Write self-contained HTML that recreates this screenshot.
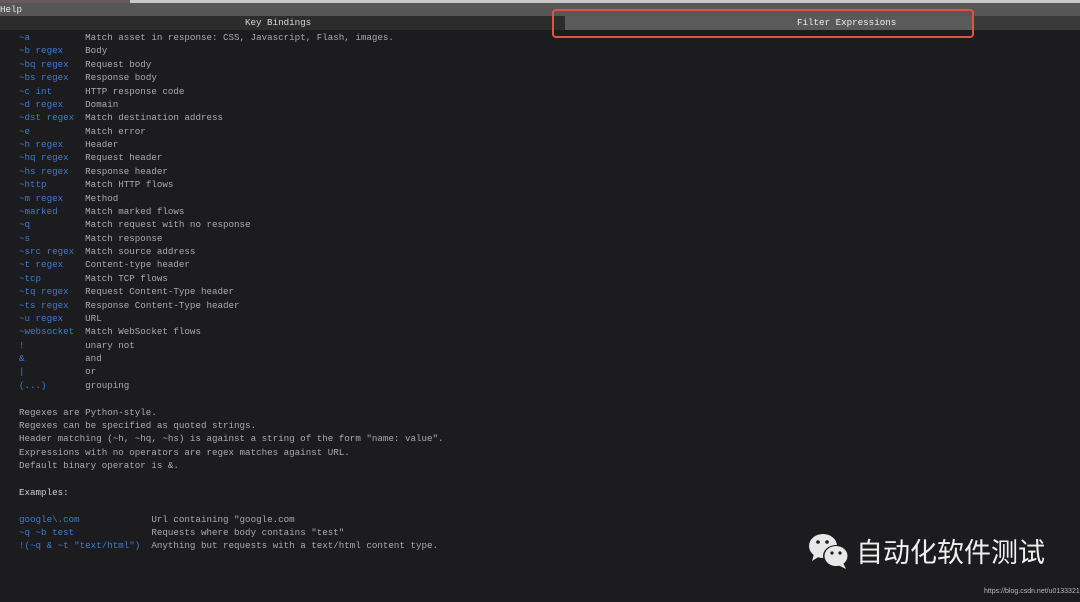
<!DOCTYPE html>
<html><head><meta charset="utf-8"><style>
html,body{margin:0;padding:0;}
body{width:1080px;height:602px;background:#1c1c1e;position:relative;overflow:hidden;font-family:"Liberation Mono",monospace;}
.top{position:absolute;left:0;top:0;width:1080px;height:3px;background:#c8c8c8;}
.top2{position:absolute;left:0;top:0;width:130px;height:3px;background:#6a5a5a;}
.help{position:absolute;left:0;top:3px;width:1080px;height:13px;background:#565656;color:#e8e8e8;font-size:9.2px;line-height:13px;}
.hdr{position:absolute;left:0;top:16px;width:1080px;height:14px;background:#2c2c2c;}
.hdr2{position:absolute;left:565px;top:16px;width:515px;height:14px;background:#5a5a5a;}
.hdr3{position:absolute;left:973px;top:16px;width:107px;height:14px;background:#3a3a3a;}
.t{position:absolute;font-size:9.2px;line-height:14px;color:#d8d8d8;}
.box{position:absolute;left:552px;top:9px;width:418px;height:25px;border:2px solid #e0553a;border-radius:4px;}
pre{position:absolute;left:19px;top:31px;margin:0;font-family:"Liberation Mono",monospace;font-size:9.2px;line-height:13.38px;color:#ababab;}
.b{color:#3d7cd0;}
.w{color:#d0d0d0;}
.wx{position:absolute;left:856px;top:535px;font-family:"Liberation Sans","Noto Sans CJK SC",sans-serif;font-size:27px;color:#f0f0f0;line-height:36px;}
.url{position:absolute;left:984px;top:588px;font-family:"Liberation Sans",sans-serif;font-size:7px;color:#bbb;}
</style></head><body>
<div class="top"></div><div class="top2"></div>
<div class="help">Help</div>
<div class="hdr"></div><div class="hdr2"></div><div class="hdr3"></div>
<div class="t" style="left:245px;top:16px;">Key Bindings</div>
<div class="t" style="left:797px;top:16px;color:#eee;">Filter Expressions</div>
<div class="box"></div>
<pre><span class="b">~a         </span> Match asset in response: CSS, Javascript, Flash, images.
<span class="b">~b regex   </span> Body
<span class="b">~bq regex  </span> Request body
<span class="b">~bs regex  </span> Response body
<span class="b">~c int     </span> HTTP response code
<span class="b">~d regex   </span> Domain
<span class="b">~dst regex </span> Match destination address
<span class="b">~e         </span> Match error
<span class="b">~h regex   </span> Header
<span class="b">~hq regex  </span> Request header
<span class="b">~hs regex  </span> Response header
<span class="b">~http      </span> Match HTTP flows
<span class="b">~m regex   </span> Method
<span class="b">~marked    </span> Match marked flows
<span class="b">~q         </span> Match request with no response
<span class="b">~s         </span> Match response
<span class="b">~src regex </span> Match source address
<span class="b">~t regex   </span> Content-type header
<span class="b">~tcp       </span> Match TCP flows
<span class="b">~tq regex  </span> Request Content-Type header
<span class="b">~ts regex  </span> Response Content-Type header
<span class="b">~u regex   </span> URL
<span class="b">~websocket </span> Match WebSocket flows
<span class="b">!          </span> unary not
<span class="b">&amp;          </span> and
<span class="b">|          </span> or
<span class="b">(...)      </span> grouping

Regexes are Python-style.
Regexes can be specified as quoted strings.
Header matching (~h, ~hq, ~hs) is against a string of the form "name: value".
Expressions with no operators are regex matches against URL.
Default binary operator is &amp;.

<span class="w">Examples:</span>

<span class="b">google\.com            </span> Url containing "google.com
<span class="b">~q ~b test             </span> Requests where body contains "test"
<span class="b">!(~q &amp; ~t "text/html") </span> Anything but requests with a text/html content type.</pre>
<svg style="position:absolute;left:806px;top:531px" width="48" height="40" viewBox="0 0 48 40">
<ellipse cx="17" cy="15" rx="14" ry="12" fill="#e8e8e8"/>
<path d="M8 23 L6 30 L14 25 Z" fill="#e8e8e8"/>
<ellipse cx="30" cy="25" rx="13" ry="11" fill="#1c1c1e"/>
<ellipse cx="30" cy="25" rx="11.5" ry="10" fill="#e8e8e8"/>
<path d="M37 32 L40 38 L32 34 Z" fill="#e8e8e8"/>
<circle cx="12" cy="11" r="1.8" fill="#1c1c1e"/><circle cx="21" cy="11" r="1.8" fill="#1c1c1e"/>
<circle cx="26" cy="22" r="1.6" fill="#1c1c1e"/><circle cx="34" cy="22" r="1.6" fill="#1c1c1e"/>
</svg>
<div class="wx">自动化软件测试</div>
<div class="url">https://blog.csdn.net/u013332124</div>
</body></html>
